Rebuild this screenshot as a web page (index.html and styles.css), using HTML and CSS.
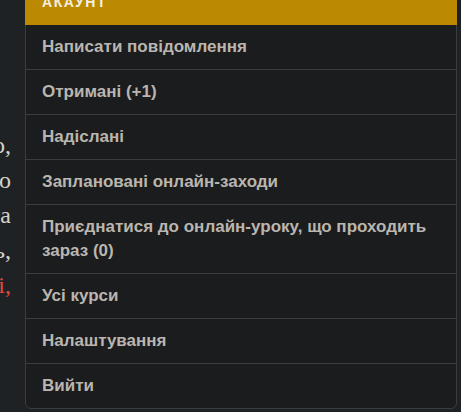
FILE: index.html
```html
<!DOCTYPE html>
<html lang="uk">
<head>
<meta charset="utf-8">
<link rel="stylesheet" href="styles.css">
</head>
<body>
<div class="page">
  <div class="bg-text">
    <div class="line l1"><span>розумно,</span></div>
    <div class="line l2"><span>якого</span></div>
    <div class="line l3"><span>навчання та</span></div>
    <div class="line l4"><span>людь,</span></div>
    <div class="line l5"><span class="red">онлайн-заняттяі,</span></div>
  </div>
  <nav class="menu">
    <div class="menu-head">Акаунт</div>
    <ul class="menu-list">
      <li class="menu-item">Написати повідомлення</li>
      <li class="menu-item">Отримані (+1)</li>
      <li class="menu-item">Надіслані</li>
      <li class="menu-item">Заплановані онлайн-заходи</li>
      <li class="menu-item">Приєднатися до онлайн-уроку, що проходить зараз (0)</li>
      <li class="menu-item">Усі курси</li>
      <li class="menu-item">Налаштування</li>
      <li class="menu-item">Вийти</li>
    </ul>
  </nav>
</div>
</body>
</html>
```
FILE: styles.css
```css
html, body {
  margin: 0;
  padding: 0;
  background: #1f2224;
  overflow: hidden;
  width: 461px;
  height: 412px;
}
.page {
  position: relative;
  width: 461px;
  height: 412px;
  overflow: hidden;
}
.bg-text {
  width: 11px;
  padding-top: 128px;
  font-family: "Liberation Serif", serif;
  font-size: 24px;
  color: #d6d2cb;
}
.line {
  display: flex;
  justify-content: flex-end;
  white-space: nowrap;
  height: 35px;
  line-height: 35px;
}
.red { color: #e2463f; }
.menu {
  position: absolute;
  left: 25px;
  top: -20px;
  width: 432px;
  box-sizing: border-box;
  background: #1b1c1e;
  border: 1px solid #3a3d3f;
  border-radius: 6px;
  font-family: "Liberation Sans", Arial, sans-serif;
}
.menu-head {
  margin: -1px -1px 0;
  padding: 10px 17px 11px;
  background: #bb8a00;
  color: #f4efe6;
  font-weight: bold;
  font-size: 14px;
  line-height: 24px;
  letter-spacing: 1.6px;
  text-transform: uppercase;
  border-radius: 6px 6px 0 0;
}
.menu-list {
  list-style: none;
  margin: 0;
  padding: 0;
}
.menu-item {
  padding: 10px 16px;
  line-height: 24px;
  font-size: 17px;
  font-weight: bold;
  color: #bab6af;
  border-top: 1px solid #3a3d3f;
}
.menu-item:first-child { border-top: none; }
```
